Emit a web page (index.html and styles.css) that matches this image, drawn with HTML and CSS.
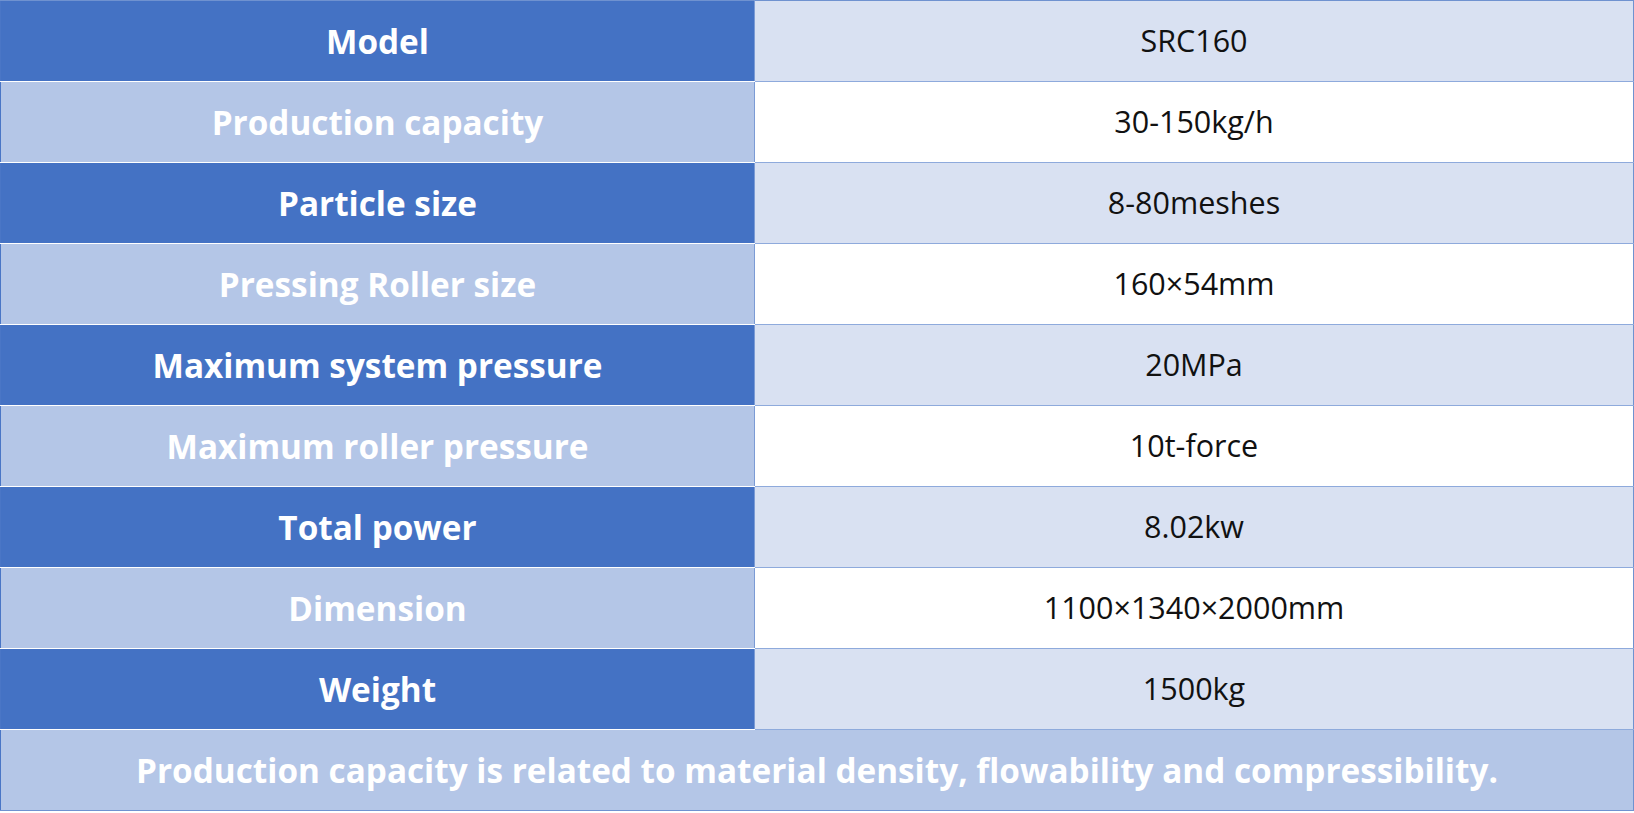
FILE: index.html
```html
<!DOCTYPE html>
<html>
<head>
<meta charset="utf-8">
<link rel="stylesheet" href="styles.css">
</head>
<body>
<table class="spec">
  <tr class="odd"><th>Model</th><td>SRC160</td></tr>
  <tr class="even"><th>Production capacity</th><td>30-150kg/h</td></tr>
  <tr class="odd"><th>Particle size</th><td>8-80meshes</td></tr>
  <tr class="even"><th>Pressing Roller size</th><td>160×54mm</td></tr>
  <tr class="odd"><th>Maximum system pressure</th><td>20MPa</td></tr>
  <tr class="even"><th>Maximum roller pressure</th><td>10t-force</td></tr>
  <tr class="odd"><th>Total power</th><td>8.02kw</td></tr>
  <tr class="even"><th>Dimension</th><td>1100×1340×2000mm</td></tr>
  <tr class="odd"><th>Weight</th><td>1500kg</td></tr>
  <tr class="note"><th colspan="2">Production capacity is related to material density, flowability and compressibility.</th></tr>
</table>
</body>
</html>
```

FILE: styles.css
```css
html, body {
  margin: 0;
  padding: 0;
  background: #ffffff;
}
.spec {
  border-collapse: collapse;
  width: 1634px;
  table-layout: fixed;
  font-family: "Open Sans", "Noto Sans", sans-serif;
}
.spec tr {
  height: 81px;
}
.spec th, .spec td {
  padding: 0;
  text-align: center;
  vertical-align: middle;
}
.spec th {
  width: 753px;
  color: #ffffff;
  font-weight: 700;
  font-size: 33.3px;
  border-bottom: 1px solid #ffffff;
  border-right: 1px solid #7b9bd5;
  border-left: 1px solid #4a76c6;
}
.spec td {
  color: #111111;
  font-size: 30.5px;
  padding-bottom: 3px;
  border-bottom: 1px solid #8eaadc;
  border-right: 1px solid #6f92d0;
}
.spec tr:first-child th, .spec tr:first-child td {
  border-top: 1px solid #6f92d0;
}
.odd th { background: #4472c4; }
.even th { background: #b4c6e7; }
.odd td { background: #d9e1f2; }
.even td { background: #ffffff; }
.note th {
  background: #b4c6e7;
  border-bottom: 1px solid #6f92d0;
  border-right: 1px solid #6f92d0;
}
```
